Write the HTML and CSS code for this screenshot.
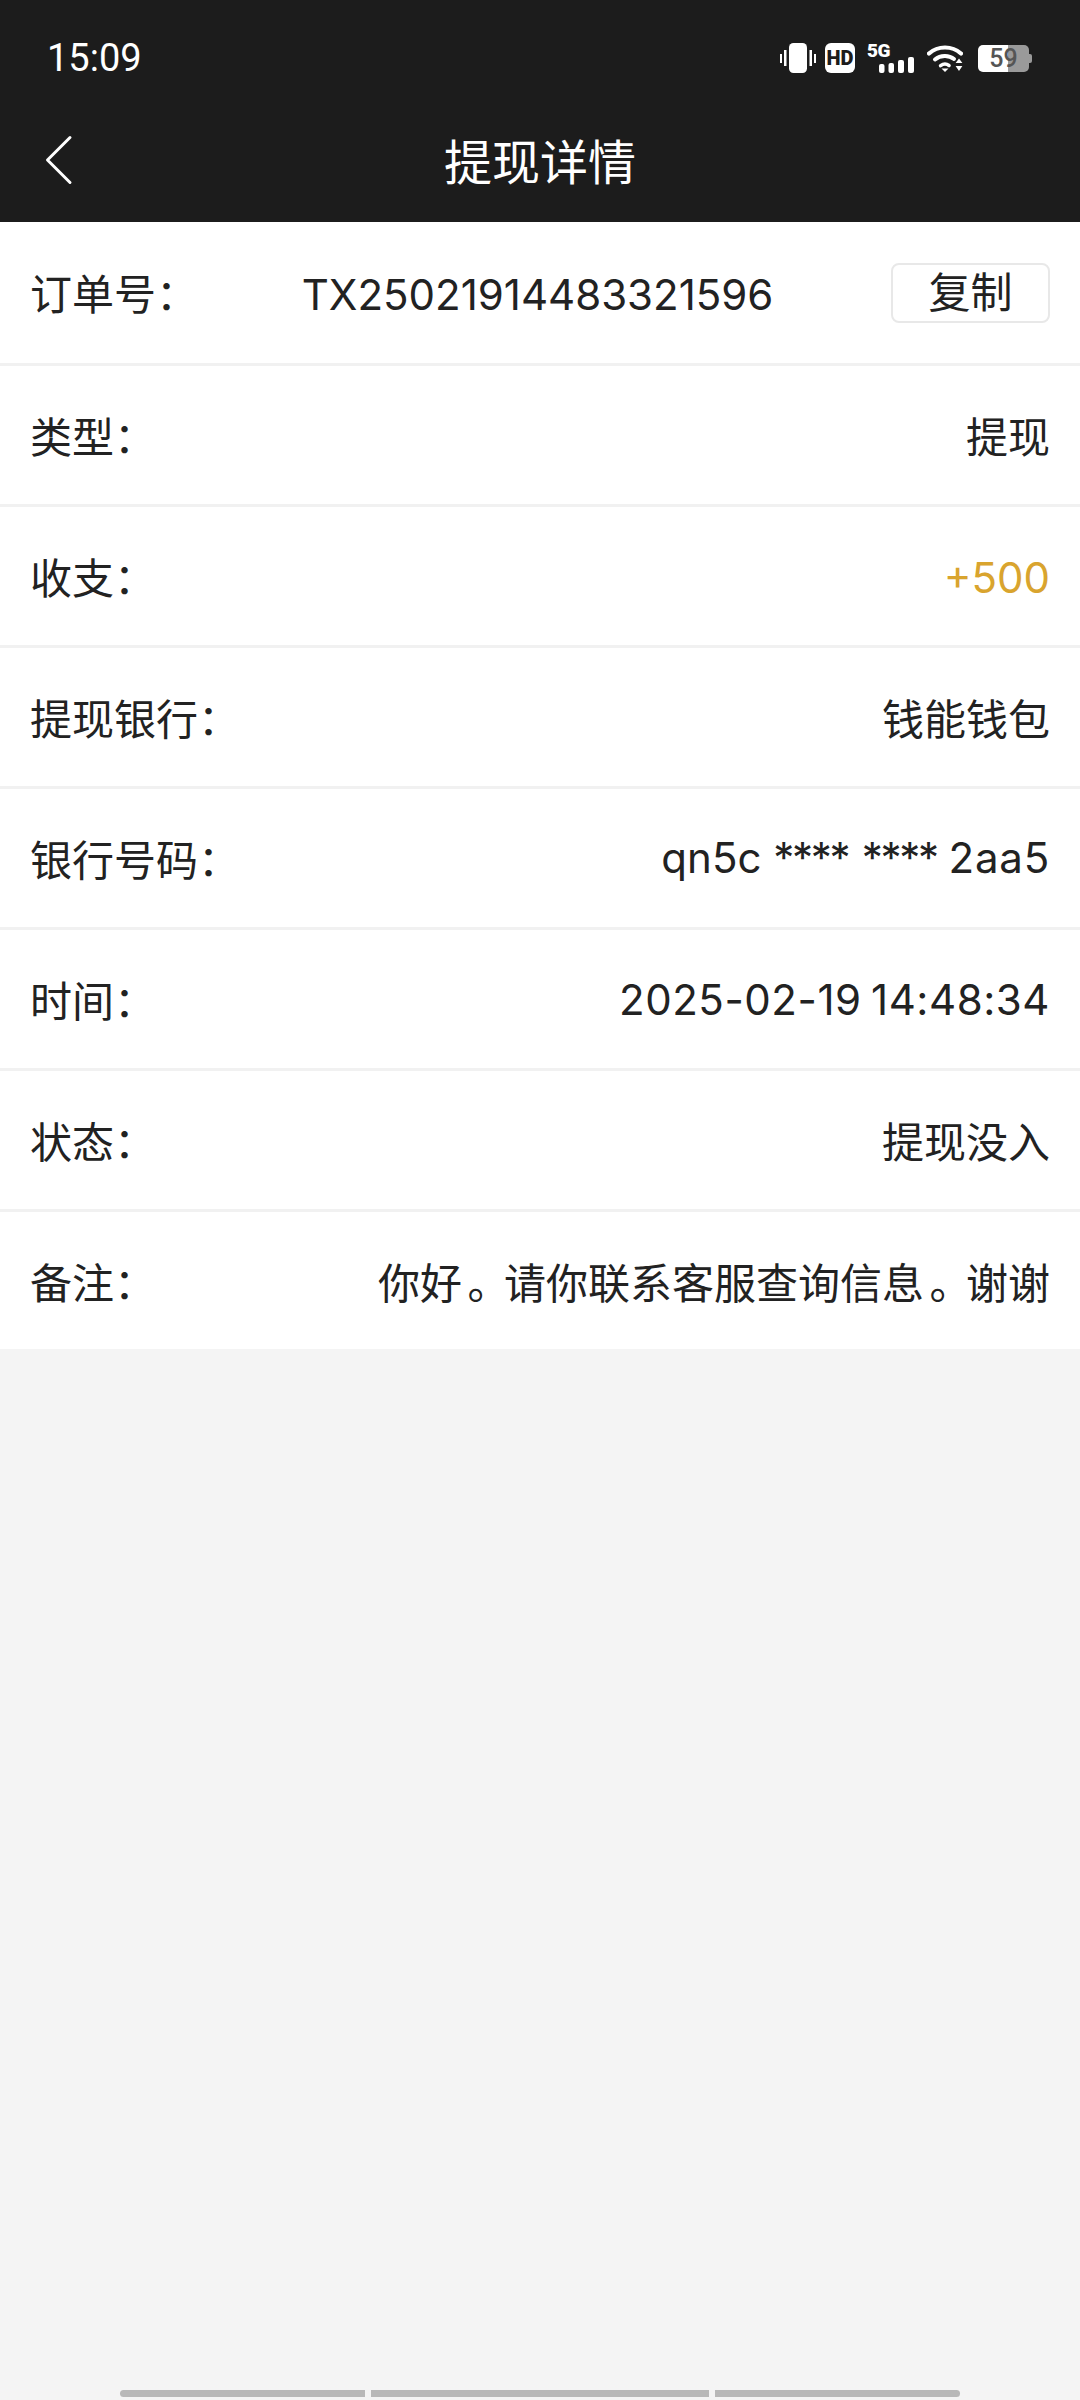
FILE: index.html
```html
<!DOCTYPE html>
<html lang="zh-CN">
<head>
    <meta charset="UTF-8">
    <meta name="viewport" content="width=device-width, initial-scale=1.0">
    <title>提现详情</title>
    <link rel="stylesheet" href="styles.css">
</head>
<body>
    <header class="top">
        <div class="status">
            <span class="clock">15:09</span>
            <div class="status-icons">
                <svg class="ic-vibrate" width="36" height="30" viewBox="0 0 36 30">
                    <rect x="9" y="0" width="18" height="30" rx="4.5" fill="#fff"/>
                    <rect x="0" y="11" width="2" height="9" fill="#fff"/>
                    <rect x="4" y="7" width="2.5" height="16" fill="#fff"/>
                    <rect x="29.5" y="7" width="2.5" height="16" fill="#fff"/>
                    <rect x="34" y="11" width="2" height="9" fill="#fff"/>
                </svg>
                <span class="ic-hd">HD</span>
                <div class="ic-signal">
                    <span class="net">5G</span>
                    <svg width="35" height="16" viewBox="0 0 35 16">
                        <rect x="0" y="7" width="5.5" height="9" rx="2" fill="#fff"/>
                        <rect x="9.5" y="6" width="5.5" height="10" rx="2" fill="#fff"/>
                        <rect x="19" y="3" width="6" height="13" rx="2" fill="#fff"/>
                        <rect x="29" y="0" width="6" height="16" rx="2" fill="#fff"/>
                    </svg>
                </div>
                <svg class="ic-wifi" width="36" height="28" viewBox="0 0 36 28">
                    <path d="M2 9.5C11 1.5 25 1.5 34 9.5" fill="none" stroke="#fff" stroke-width="4.2" stroke-linecap="round"/>
                    <path d="M8 15.5C13.5 10.8 22 10.8 27 15" fill="none" stroke="#fff" stroke-width="4" stroke-linecap="round"/>
                    <path d="M13.6 21.6C16.4 19.6 19.4 19.6 22 21.4" fill="none" stroke="#fff" stroke-width="3.6" stroke-linecap="round"/>
                    <path d="M14.5 24.4h7L18 28z" fill="#fff"/>
                    <path d="M32 14.5l3.4 4.5h-6.8zM28.6 22h6.8L32 27z" fill="#fff"/>
                </svg>
                <div class="ic-battery">
                    <div class="cell"><span>59</span></div>
                    <i class="tip"></i>
                </div>
            </div>
        </div>
        <nav class="nav">
            <svg class="back" width="30" height="50" viewBox="0 0 30 50">
                <path d="M26 2.5L3.5 25L26 47.5" fill="none" stroke="#fff" stroke-width="3" stroke-linecap="round" stroke-linejoin="round"/>
            </svg>
            <h1>提现详情</h1>
        </nav>
    </header>

    <main class="list">
        <div class="row first">
            <span>订单号：</span>
            <span class="order">TX25021914483321596</span>
            <button class="copy">复制</button>
        </div>
        <div class="row"><span>类型：</span><span>提现</span></div>
        <div class="row"><span>收支：</span><span class="gold">+500</span></div>
        <div class="row"><span>提现银行：</span><span>钱能钱包</span></div>
        <div class="row"><span>银行号码：</span><span>qn5c <span class="mask">**** ****</span> <span class="tail">2aa5</span></span></div>
        <div class="row"><span>时间：</span><span class="date">2025-02-19 14:48:34</span></div>
        <div class="row"><span>状态：</span><span>提现没入</span></div>
        <div class="row last"><span>备注：</span><span>你好<i class="stop">。</i>请你联系客服查询信息<i class="stop">。</i>谢谢</span></div>
    </main>

    <div class="home-bar">
        <i class="seg-a"></i>
        <i class="seg-b"></i>
        <i class="seg-c"></i>
    </div>
</body>
</html>
```

FILE: styles.css
```css
* {
    box-sizing: border-box;
}
html, body {
    margin: 0;
    padding: 0;
}
body {
    width: 1080px;
    height: 2400px;
    background: #f4f4f4;
    color: #222;
    font-family: Inter, "Noto Sans CJK SC", sans-serif;
    font-size: 42px;
    display: flex;
    flex-direction: column;
    overflow: hidden;
}
.top {
    height: 222px;
    background: #1c1c1c;
    color: #fff;
}
.status {
    height: 112px;
    padding: 0 48px 0 47px;
    display: flex;
    align-items: center;
    justify-content: space-between;
}
.clock {
    font-family: Roboto, sans-serif;
    font-size: 38px;
    margin-top: 4px;
}
.status-icons {
    display: flex;
    align-items: center;
    margin-top: 4px;
}
.ic-hd {
    width: 30px;
    height: 30px;
    margin-left: 9px;
    background: #fff;
    color: #1c1c1c;
    border-radius: 6px;
    font: 900 20px/30px Roboto, sans-serif;
    text-align: center;
}
.ic-signal {
    width: 47px;
    height: 30px;
    margin-left: 12px;
    position: relative;
}
.ic-signal svg {
    position: absolute;
    right: 0;
    bottom: 0;
}
.net {
    position: absolute;
    left: 0;
    top: -1px;
    font: 900 19px/17px Roboto, sans-serif;
    letter-spacing: -0.5px;
}
.ic-wifi {
    margin-left: 13px;
}
.ic-battery {
    margin-left: 15px;
    display: flex;
    align-items: center;
}
.cell {
    width: 51px;
    height: 27px;
    border-radius: 5px;
    background: linear-gradient(to right, #fff 59%, #9a9a9a 59%);
    color: #555;
    font: 500 25px/27px Roboto, sans-serif;
    text-align: center;
}
.tip {
    width: 3px;
    height: 9px;
    background: #9a9a9a;
    border-radius: 0 2px 2px 0;
}
.nav {
    height: 110px;
    position: relative;
    display: flex;
    align-items: center;
    justify-content: center;
}
.nav h1 {
    margin: 0;
    font-size: 48px;
    font-weight: 400;
    margin-top: -17px;
}
.back {
    position: absolute;
    left: 44px;
    top: 23px;
}
.list {
    background: #fff;
}
.row {
    height: 141px;
    padding: 0 30px 2px;
    border-bottom: 3px solid #f1f1f1;
    display: flex;
    align-items: center;
    justify-content: space-between;
}
.row.first {
    height: 144px;
}
.row.last {
    height: 137px;
    border-bottom: 0;
    padding-bottom: 0;
}
.order {
    margin-right: 14px;
    margin-top: 5px;
}
.gold {
    color: #d9a42e;
    margin-top: 5px;
}
.date {
    letter-spacing: 0.55px;
    word-spacing: -3px;
    margin-top: 2px;
}
.mask {
    letter-spacing: -2.3px;
    word-spacing: 4px;
}
.tail {
    letter-spacing: 0.8px;
}
.stop {
    font-style: normal;
    font-feature-settings: "halt";
    display: inline-block;
    width: 42px;
    padding-right: 10px;
    text-align: center;
}
.copy {
    width: 159px;
    height: 60px;
    margin-top: 2px;
    padding: 0;
    background: #fff;
    color: #222;
    border: 2px solid #e8e8e8;
    border-radius: 8px;
    font: inherit;
    line-height: 54px;
}
.home-bar {
    margin-top: auto;
    margin-bottom: 3px;
    padding-left: 120px;
    display: flex;
    gap: 6px;
}
.home-bar i {
    height: 7px;
    background: #b8b8b8;
}
.seg-a {
    width: 245px;
    border-radius: 4px 0 0 4px;
}
.seg-b {
    width: 338px;
}
.seg-c {
    width: 245px;
    border-radius: 0 4px 4px 0;
}
```
